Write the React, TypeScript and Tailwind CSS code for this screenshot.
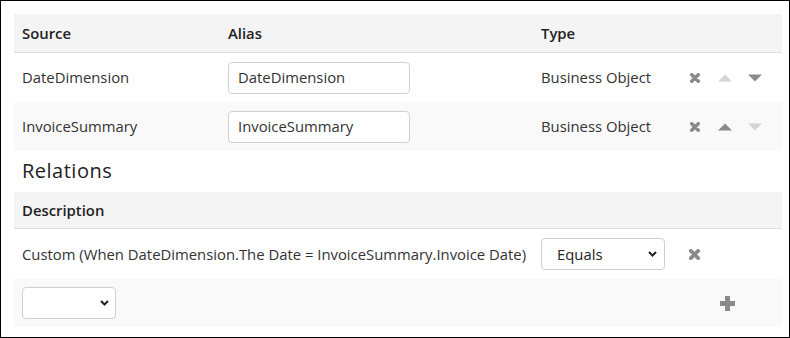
import React from "react";

const XIcon = ({ size = 10 }: { size?: number }) => (
  <svg width={size} height={size} viewBox="0 0 10 10" className="shrink-0">
    <path d="M1.7 1.7 L8.3 8.3 M8.3 1.7 L1.7 8.3" stroke="#8a8a8a" strokeWidth="3.4" strokeLinecap="round" />
  </svg>
);

const Up = ({ color }: { color: string }) => (
  <svg width="14" height="8" viewBox="0 0 14 8" className="shrink-0">
    <polygon points="7,0.5 14,7.5 0,7.5" fill={color} />
  </svg>
);

const Down = ({ color }: { color: string }) => (
  <svg width="14" height="8" viewBox="0 0 14 8" className="shrink-0">
    <polygon points="0,0.5 14,0.5 7,7.5" fill={color} />
  </svg>
);

const Chevron = () => (
  <svg width="9" height="6" viewBox="0 0 9 6" className="shrink-0">
    <path d="M1 1 L4.5 4.5 L8 1" stroke="#222" strokeWidth="2" fill="none" />
  </svg>
);

const Plus = () => (
  <svg width="15" height="15" viewBox="0 0 15 15">
    <path d="M5 0 H10 V5 H15 V10 H10 V15 H5 V10 H0 V5 H5 Z" fill="#8a8a8a" />
  </svg>
);

const TextBox = ({ value }: { value: string }) => (
  <div className="w-[182px] h-[32px] border border-[#cfcfcf] rounded-[4px] bg-white flex items-center pl-[9px] text-[#333]">
    {value}
  </div>
);

export default function App() {
  const cols = "grid grid-cols-[206px_313px_147px_1fr]";
  return (
    <div className="w-[790px] h-[338px] border border-black bg-white pl-[13px] pr-[7px] pt-[13px] font-['Open_Sans',sans-serif] text-[14.85px] text-[#333]">
      {/* Sources header */}
      <div className={`${cols} h-[39px] bg-[#f4f4f4] border-b border-[#dedede] items-center font-semibold text-[#222]`}>
        <div className="pl-2">Source</div>
        <div className="pl-2">Alias</div>
        <div className="pl-2">Type</div>
        <div />
      </div>
      {/* Row 1 */}
      <div className={`${cols} h-[49px] items-center bg-white`}>
        <div className="pl-2">DateDimension</div>
        <div className="pl-2">
          <TextBox value="DateDimension" />
        </div>
        <div className="pl-2">Business Object</div>
        <div className="flex items-center pl-[10px]">
          <XIcon />
          <div className="ml-[18px]">
            <Up color="#d4d4d4" />
          </div>
          <div className="ml-[16px]">
            <Down color="#8a8a8a" />
          </div>
        </div>
      </div>
      {/* Row 2 */}
      <div className={`${cols} h-[49px] items-center bg-[#f9f9f9]`}>
        <div className="pl-2">InvoiceSummary</div>
        <div className="pl-2">
          <TextBox value="InvoiceSummary" />
        </div>
        <div className="pl-2">Business Object</div>
        <div className="flex items-center pl-[10px]">
          <XIcon />
          <div className="ml-[18px]">
            <Up color="#8a8a8a" />
          </div>
          <div className="ml-[16px]">
            <Down color="#d4d4d4" />
          </div>
        </div>
      </div>
      {/* Relations heading */}
      <div className="h-[41px] pt-[6px] pl-2 text-[20px] leading-[27px] text-[#222] tracking-[0.5px]">
        Relations
      </div>
      {/* Description header */}
      <div className="h-[37px] bg-[#f4f4f4] border-b border-[#dedede] flex items-center pl-2 font-semibold text-[#222]">
        Description
      </div>
      {/* Custom row */}
      <div className="grid grid-cols-[519px_147px_1fr] h-[50px] items-center bg-white">
        <div className="pl-2 whitespace-nowrap">
          Custom (When DateDimension.The Date = InvoiceSummary.Invoice Date)
        </div>
        <div className="pl-2">
          <div className="w-[124px] h-[32px] border border-[#cfcfcf] rounded-[4px] bg-white flex items-center justify-between pl-[15px] pr-[7px] text-[#222]">
            <span>Equals</span>
            <Chevron />
          </div>
        </div>
        <div className="flex items-center pl-[9px]">
          <XIcon size={11} />
        </div>
      </div>
      {/* Add row */}
      <div className="grid grid-cols-[666px_1fr] h-[48px] items-center bg-[#f9f9f9]">
        <div className="pl-2">
          <div className="w-[94px] h-[32px] border border-[#cfcfcf] rounded-[4px] bg-white flex items-center justify-end pr-[6px]">
            <Chevron />
          </div>
        </div>
        <div className="flex items-center pl-[40px]">
          <Plus />
        </div>
      </div>
    </div>
  );
}
